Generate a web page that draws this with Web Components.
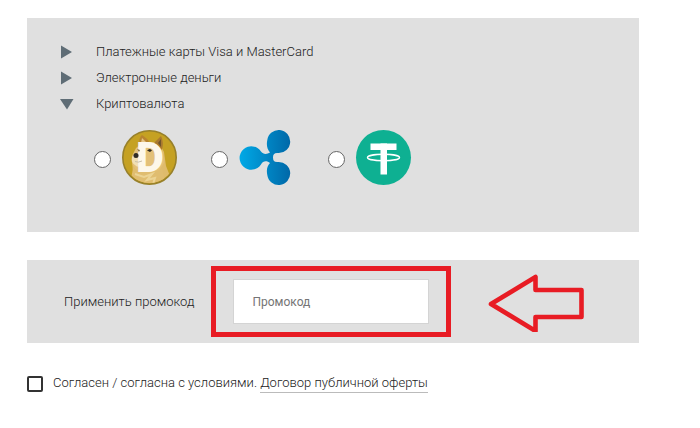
<!DOCTYPE html>
<html lang="ru">
<head>
<meta charset="utf-8">
<title>Оплата</title>
<style>
    body {
        margin: 0;
        padding: 18px 61px 24px 27px;
        background: #fff;
        color: #222;
        font: 300 13px/26px Roboto, "Liberation Sans", sans-serif;
    }
</style>
</head>
<body>
<payment-page></payment-page>

<script>
class BaseElement extends HTMLElement{
    constructor(){
        super();
        const template=document.createElement('template');
        template.innerHTML = this.constructor.markup;
        this._shadowRoot= this.attachShadow({mode: 'open'});
        this._shadowRoot.appendChild(template.content.cloneNode(true));
    }
}

class GreyPanel extends BaseElement{
    static markup = `
    <style>
        :host {
            display: block;
            background: #e0e0e0;
        }
    </style>
    <slot></slot>
    `;
}

class PayGroup extends BaseElement{
    static markup = `
    <style>
        :host { display: block; }
        button {
            display: flex;
            align-items: center;
            gap: 22px;
            padding: 0;
            border: none;
            background: none;
            color: inherit;
            font: inherit;
            cursor: pointer;
        }
        svg {
            width: 14px;
            height: 14px;
            fill: #5f6d76;
        }
        .down { display: none; }
        :host([open]) .down { display: block; }
        :host([open]) .right { display: none; }
        .content { display: none; }
        :host([open]) .content { display: block; }
    </style>
    <button type="button">
        <svg viewBox="0 0 14 14" aria-hidden="true">
            <path class="right" d="M1 0.500 12 7 1 13.500z"/>
            <path class="down" d="M0 2h13.500L7 12.500z"/>
        </svg>
        <span></span>
    </button>
    <div class="content"><slot></slot></div>
    `;

    constructor(){
        super();
        this.button = this._shadowRoot.querySelector('button');
        this.button.addEventListener('click', () => {
            this.toggleAttribute('open');
            this.update();
        });
    }

    connectedCallback(){
        this._shadowRoot.querySelector('span').textContent=this.getAttribute('label');
        this.update();
    }

    update(){
        this.button.setAttribute('aria-expanded', this.hasAttribute('open'));
    }
}

const coins = {
    doge: `
        <defs>
            <clipPath id="coin"><circle cx="27.500" cy="27.500" r="25.500"/></clipPath>
        </defs>
        <circle cx="27.500" cy="27.500" r="26.700" fill="#c5a123" stroke="#98812b" stroke-width="1.600"/>
        <g clip-path="url(#coin)">
            <path d="M9 55 12 43Q9 36 11 26L19 12 37 12 42 22 44 36 48 46 44 55z" fill="#dfbb6c"/>
            <path d="M17 15Q17 7 20 5Q25 8 28 13L22 16z" fill="#b98430"/>
            <path d="M19 13 20 8 24 12z" fill="#e5c383"/>
            <path d="M32 13 39 6Q42 12 40 20z" fill="#a97930"/>
            <path d="M36 13 39 9 39 17z" fill="#70542b"/>
            <path d="M14 18Q22 10 34 14Q42 20 42 33L35 44 17 42Q8 36 10 26z" fill="#e3c078"/>
            <path d="M11 38Q24 46 40 39L44 55 8 55z" fill="#e0bd70"/>
            <path d="M13 44 22 47 30 44 25 50 33 48 31 54" fill="none" stroke="#ecd494" stroke-width="2"/>
            <path d="M10 27Q14 22 18 24L19 36Q15 38 13 35Q9 33 10 27z" fill="#f1dfb4"/>
        </g>
        <text x="14" y="42" font-family="Roboto" font-weight="900" font-size="43" fill="#fdf7ea">D</text>
        <ellipse cx="14" cy="25.500" rx="2.500" ry="2.500" fill="#302b25"/>
        <path d="M13 31.500Q16 33 20 31" fill="none" stroke="#c9bfa9" stroke-width="1"/>
        <path d="M25 20.500Q28 17.500 30 20.500L28 22z" fill="#302b20"/>
        <path d="M15 19 18 20 17 22z" fill="#8a743e"/>
    `,
    ripple: `
        <defs>
            <linearGradient id="blue" x1="0" x2="1" y1="0" y2="0">
                <stop offset="0" stop-color="#00a9e6"/>
                <stop offset="1" stop-color="#0068a8"/>
            </linearGradient>
        </defs>
        <path fill="url(#blue)" d="M22 21.500C24 24.500 28 24.500 31 22.500C28 19 27.300 15 28.300 10A11.500 11.500 0 1 1 39.500 23C35.500 22.500 34 24 34 27.500C34 31 35.500 32.500 39.500 32A11.500 11.500 0 1 1 28.300 45C27.300 40 28 36 31 33C28 30.500 24 30.500 22 34.500A11.700 11.700 0 1 1 22 21.500z"/>
    `,
    tether: `
        <circle cx="27.500" cy="27.500" r="27.500" fill="#0eb092"/>
        <ellipse cx="27.500" cy="27.500" rx="16" ry="3.200" fill="none" stroke="#fff" stroke-width="1.400"/>
        <rect x="14.500" y="13.500" width="26" height="6.500" fill="#fff"/>
        <rect x="24.500" y="13.500" width="6.500" height="31" fill="#fff"/>
    `
};

class CoinOption extends BaseElement{
    static markup = `
    <style>
        :host { display: block; }
        label {
            display: flex;
            align-items: center;
            gap: 11px;
            cursor: pointer;
        }
        input {
            appearance: none;
            box-sizing: border-box;
            width: 17px;
            height: 17px;
            margin: 3px 0 0;
            border: 1px solid #666;
            border-radius: 50%;
            background: #fff;
        }
        input:checked {
            background: radial-gradient(#5f6d76 4px, #fff 5px);
        }
        svg {
            display: block;
            width: 55px;
            height: 55px;
            overflow: visible;
        }
    </style>
    <label>
        <input type="radio" name="coin">
        <svg viewBox="0 0 55 55" aria-hidden="true"></svg>
    </label>
    `;

    connectedCallback(){
        const input = this._shadowRoot.querySelector('input');
        input.value = this.getAttribute('coin');
        input.setAttribute('aria-label', this.getAttribute('label'));
        // radios live in separate roots, so the group is cleared by hand
        input.addEventListener('change', () => {
            for (const other of this.parentNode.querySelectorAll('coin-option')) {
                if (other !== this) other.shadowRoot.querySelector('input').checked = false;
            }
        });
        this._shadowRoot.querySelector('svg').innerHTML = coins[this.getAttribute('coin')];
    }
}

class PromoField extends BaseElement{
    static markup = `
    <style>
        :host {
            display: flex;
            align-items: center;
            gap: 17px;
        }
        .frame {
            padding: 8px 17px;
            border: 5px solid #e81c24;
        }
        input {
            display: block;
            box-sizing: border-box;
            width: 196px;
            height: 45px;
            padding: 0 18px;
            border: 1px solid #d4d4d4;
            border-radius: 0;
            background: #fff;
            color: #222;
            font: 400 12px/20px Roboto, "Liberation Sans", sans-serif;
        }
        input::placeholder {
            color: #757575;
            opacity: 1;
        }
    </style>
    <label for="promo">Применить промокод</label>
    <div class="frame"><input id="promo" type="text" placeholder="Промокод"></div>
    `;
}

class PointerArrow extends BaseElement{
    static markup = `
    <style>
        :host { display: block; }
        svg {
            display: block;
            width: 97px;
            height: 60px;
        }
    </style>
    <svg viewBox="0 0 97 60" aria-hidden="true">
        <path d="M3 32 47.500 5V18H93.500V45H47.500V59z" fill="none" stroke="#e81c24" stroke-width="4.600" stroke-linejoin="round"/>
    </svg>
    `;
}

class TermsCheck extends BaseElement{
    static markup = `
    <style>
        :host {
            display: flex;
            align-items: center;
            gap: 10px;
            line-height: 18px;
        }
        input {
            appearance: none;
            box-sizing: border-box;
            flex: none;
            width: 16px;
            height: 16px;
            margin: 0;
            border: 2px solid #333;
            border-radius: 2px;
            background: #fff;
        }
        input:checked {
            background: #5f6d76;
        }
        a {
            display: inline-block;
            border-bottom: 1px solid #bbb;
            color: inherit;
            text-decoration: none;
        }
    </style>
    <input id="terms" type="checkbox">
    <div><label for="terms">Согласен / согласна с условиями.</label> <a href="#">Договор публичной оферты</a></div>
    `;
}

class PaymentPage extends BaseElement{
    static markup = `
    <style>
        :host {
            display: flex;
            flex-direction: column;
        }
        .methods { padding: 21px 33px 47px; }
        .coins {
            display: flex;
            flex-wrap: wrap;
            gap: 34px;
            padding: 13px 0 0 34px;
        }
        .promo {
            display: flex;
            align-items: center;
            gap: 37px;
            margin-top: 28px;
            padding: 6px 37px;
        }
        terms-check { margin-top: 31px; }
    </style>
    <grey-panel class="methods">
        <pay-group label="Платежные карты Visa и MasterCard"></pay-group>
        <pay-group label="Электронные деньги"></pay-group>
        <pay-group label="Криптовалюта" open>
            <div class="coins">
                <coin-option coin="doge" label="Dogecoin"></coin-option>
                <coin-option coin="ripple" label="Ripple"></coin-option>
                <coin-option coin="tether" label="Tether"></coin-option>
            </div>
        </pay-group>
    </grey-panel>
    <grey-panel class="promo">
        <promo-field></promo-field>
        <pointer-arrow></pointer-arrow>
    </grey-panel>
    <terms-check></terms-check>
    `;
}

window.customElements.define('grey-panel',GreyPanel);
window.customElements.define('pay-group',PayGroup);
window.customElements.define('coin-option',CoinOption);
window.customElements.define('promo-field',PromoField);
window.customElements.define('pointer-arrow',PointerArrow);
window.customElements.define('terms-check',TermsCheck);
window.customElements.define('payment-page',PaymentPage);
</script>
</body>
</html>
